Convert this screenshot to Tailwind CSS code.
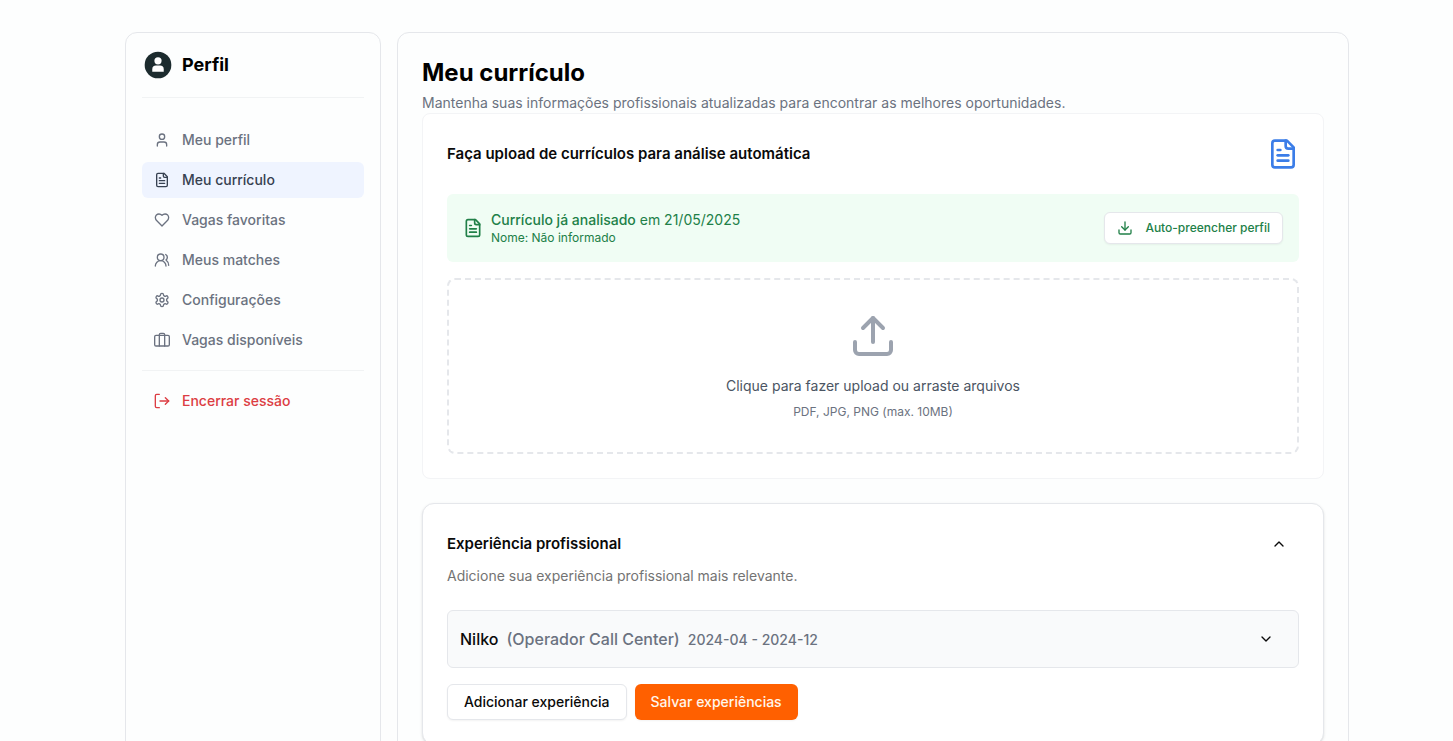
<!DOCTYPE html>
<html lang="pt-BR">
<head>
  <meta charset="UTF-8" />
  <meta name="viewport" content="width=device-width, initial-scale=1.0" />
  <title>Meu currículo</title>
  <script src="https://cdn.jsdelivr.net/npm/@tailwindcss/browser@4"></script>
</head>
<body class="bg-[#fdfefe] text-[#0a0a0a] font-['Inter',sans-serif] antialiased">
  <!-- Icons -->
  <svg class="hidden" xmlns="http://www.w3.org/2000/svg">
    <symbol id="file-text" viewBox="0 0 24 24">
      <path d="M15 2H6a2 2 0 0 0-2 2v16a2 2 0 0 0 2 2h12a2 2 0 0 0 2-2V7Z" />
      <path d="M14 2v4a2 2 0 0 0 2 2h4" />
      <path d="M10 9H8" />
      <path d="M16 13H8" />
      <path d="M16 17H8" />
    </symbol>
  </svg>

  <div class="flex min-h-screen gap-4 pt-8 pl-[125px] pr-[104px]">
    <aside class="w-64 shrink-0 rounded-xl border border-[#e5e7eb] p-4">
      <div class="flex items-center gap-2 border-b border-[#f1f3f4] pb-4">
        <svg class="size-8" viewBox="0 0 24 24">
          <circle cx="12" cy="12" r="10" fill="#1c2b2e" />
          <circle cx="12" cy="8.9" r="2.7" fill="#fff" />
          <path d="M7.7 17v-1.8a2.8 2.8 0 0 1 2.8-2.8h3a2.8 2.8 0 0 1 2.8 2.8V17Z" fill="#fff" />
        </svg>
        <h2 class="text-lg font-bold text-black">Perfil</h2>
      </div>

      <nav class="mt-6 flex flex-col gap-1 text-sm font-medium text-[#6b7280]">
        <a href="#" class="flex h-9 items-center gap-3 rounded-md px-3">
          <svg class="size-4" viewBox="0 0 24 24" fill="none" stroke="currentColor" stroke-width="2" stroke-linecap="round" stroke-linejoin="round">
            <path d="M19 21v-2a4 4 0 0 0-4-4H9a4 4 0 0 0-4 4v2" />
            <circle cx="12" cy="7" r="4" />
          </svg>
          Meu perfil
        </a>
        <a href="#" class="flex h-9 items-center gap-3 rounded-md bg-[#eff4ff] px-3 text-[#374151]">
          <svg class="size-4" fill="none" stroke="currentColor" stroke-width="2" stroke-linecap="round" stroke-linejoin="round"><use href="#file-text" /></svg>
          Meu currículo
        </a>
        <a href="#" class="flex h-9 items-center gap-3 rounded-md px-3">
          <svg class="size-4" viewBox="0 0 24 24" fill="none" stroke="currentColor" stroke-width="2" stroke-linecap="round" stroke-linejoin="round">
            <path d="M19 14c1.49-1.46 3-3.21 3-5.5A5.5 5.5 0 0 0 16.5 3c-1.76 0-3 .5-4.5 2-1.5-1.5-2.74-2-4.5-2A5.5 5.5 0 0 0 2 8.5c0 2.3 1.5 4.05 3 5.5l7 7Z" />
          </svg>
          Vagas favoritas
        </a>
        <a href="#" class="flex h-9 items-center gap-3 rounded-md px-3">
          <svg class="size-4" viewBox="0 0 24 24" fill="none" stroke="currentColor" stroke-width="2" stroke-linecap="round" stroke-linejoin="round">
            <path d="M18 21a8 8 0 0 0-16 0" />
            <circle cx="10" cy="8" r="5" />
            <path d="M22 20c0-3.37-2-6.5-4-8a5 5 0 0 0-.45-8.3" />
          </svg>
          Meus matches
        </a>
        <a href="#" class="flex h-9 items-center gap-3 rounded-md px-3">
          <svg class="size-4" viewBox="0 0 24 24" fill="none" stroke="currentColor" stroke-width="2" stroke-linecap="round" stroke-linejoin="round">
            <path d="M12.22 2h-.44a2 2 0 0 0-2 2v.18a2 2 0 0 1-1 1.73l-.43.25a2 2 0 0 1-2 0l-.15-.08a2 2 0 0 0-2.73.73l-.22.38a2 2 0 0 0 .73 2.73l.15.1a2 2 0 0 1 1 1.72v.51a2 2 0 0 1-1 1.74l-.15.09a2 2 0 0 0-.73 2.73l.22.38a2 2 0 0 0 2.73.73l.15-.08a2 2 0 0 1 2 0l.43.25a2 2 0 0 1 1 1.73V20a2 2 0 0 0 2 2h.44a2 2 0 0 0 2-2v-.18a2 2 0 0 1 1-1.73l.43-.25a2 2 0 0 1 2 0l.15.08a2 2 0 0 0 2.73-.73l.22-.39a2 2 0 0 0-.73-2.73l-.15-.08a2 2 0 0 1-1-1.74v-.5a2 2 0 0 1 1-1.74l.15-.09a2 2 0 0 0 .73-2.73l-.22-.38a2 2 0 0 0-2.73-.73l-.15.08a2 2 0 0 1-2 0l-.43-.25a2 2 0 0 1-1-1.73V4a2 2 0 0 0-2-2z" />
            <circle cx="12" cy="12" r="3" />
          </svg>
          Configurações
        </a>
        <a href="#" class="flex h-9 items-center gap-3 rounded-md px-3">
          <svg class="size-4" viewBox="0 0 24 24" fill="none" stroke="currentColor" stroke-width="2" stroke-linecap="round" stroke-linejoin="round">
            <rect x="1" y="5" width="22" height="16" rx="2" />
            <path d="M16 21V4a2 2 0 0 0-2-2h-4a2 2 0 0 0-2 2v17" />
          </svg>
          Vagas disponíveis
        </a>
      </nav>

      <div class="mt-3 border-t border-[#f1f3f4] pt-3">
        <button type="button" class="flex h-9 w-full items-center gap-3 rounded-md px-3 text-sm font-medium text-[#dc3d43]">
          <svg class="size-4" viewBox="0 0 24 24" fill="none" stroke="currentColor" stroke-width="2" stroke-linecap="round" stroke-linejoin="round">
            <path d="M8 22H4a2 2 0 0 1-2-2V4a2 2 0 0 1 2-2h4" />
            <path d="m17 17 5-5-5-5" />
            <path d="M22 12H9" />
          </svg>
          Encerrar sessão
        </button>
      </div>
    </aside>

    <main class="min-w-0 flex-1 rounded-xl border border-[#e5e7eb] p-6">
      <h1 class="text-2xl font-bold text-black">Meu currículo</h1>
      <p class="mt-1 text-sm text-[#6b7280]">Mantenha suas informações profissionais atualizadas para encontrar as melhores oportunidades.</p>

      <section class="rounded-lg border border-gray-100 bg-white p-6">
        <div class="flex items-center justify-between">
          <h2 class="text-[15px] font-semibold">Faça upload de currículos para análise automática</h2>
          <svg class="size-8 text-[#3b7de8]" fill="none" stroke="currentColor" stroke-width="2" stroke-linecap="round" stroke-linejoin="round"><use href="#file-text" /></svg>
        </div>

        <div class="mt-6 flex items-center justify-between rounded-md bg-[#f0fdf4] p-4 text-[#218048]">
          <div class="flex items-center gap-2">
            <svg class="size-5" fill="none" stroke="currentColor" stroke-width="2" stroke-linecap="round" stroke-linejoin="round"><use href="#file-text" /></svg>
            <div>
              <p class="text-sm"><span class="font-medium">Currículo já analisado</span> em 21/05/2025</p>
              <p class="text-xs">Nome: Não informado</p>
            </div>
          </div>
          <button type="button" class="flex h-8 items-center gap-3 rounded-md border border-gray-200 bg-white px-3 text-xs font-medium shadow-xs">
            <svg class="size-4" viewBox="0 0 24 24" fill="none" stroke="currentColor" stroke-width="2" stroke-linecap="round" stroke-linejoin="round">
              <path d="M21 15v4a2 2 0 0 1-2 2H5a2 2 0 0 1-2-2v-4" />
              <path d="m7 10 5 5 5-5" />
              <path d="M12 15V3" />
            </svg>
            Auto-preencher perfil
          </button>
        </div>

        <label for="curriculo" class="mt-4 flex cursor-pointer flex-col items-center rounded-lg border-2 border-dashed border-gray-200 p-8">
          <svg class="size-12 text-[#9ca3af]" viewBox="0 0 24 24" fill="none" stroke="currentColor" stroke-width="2" stroke-linecap="round" stroke-linejoin="round">
            <path d="M21 15v4a2 2 0 0 1-2 2H5a2 2 0 0 1-2-2v-4" />
            <path d="m17 8-5-5-5 5" />
            <path d="M12 3v12" />
          </svg>
          <span class="mt-4 text-sm text-[#4b5563]">Clique para fazer upload ou arraste arquivos</span>
          <span class="mt-2 text-xs text-[#6b7280]">PDF, JPG, PNG (max. 10MB)</span>
          <input id="curriculo" type="file" accept=".pdf,.jpg,.png" class="hidden" />
        </label>
      </section>

      <section class="mt-6 rounded-xl border border-gray-200 bg-white p-6 shadow-sm">
        <div class="flex items-center justify-between">
          <h2 class="text-[15px] font-semibold">Experiência profissional</h2>
          <button type="button" aria-label="Recolher" class="flex h-8 items-center px-3">
            <svg class="size-4" viewBox="0 0 24 24" fill="none" stroke="currentColor" stroke-width="2" stroke-linecap="round" stroke-linejoin="round"><path d="m18 15-6-6-6 6" /></svg>
          </button>
        </div>
        <p class="mt-1.5 text-sm text-neutral-500">Adicione sua experiência profissional mais relevante.</p>

        <div class="mt-6 flex items-center justify-between rounded-md border border-gray-200 bg-gray-50 p-3">
          <div class="flex items-baseline gap-2 font-medium">
            <span>Nilko</span>
            <span class="text-[#6b7280]">(Operador Call Center)</span>
            <span class="text-sm text-[#6b7280]">2024-04 - 2024-12</span>
          </div>
          <button type="button" aria-label="Expandir" class="flex h-8 items-center px-3">
            <svg class="size-4" viewBox="0 0 24 24" fill="none" stroke="currentColor" stroke-width="2" stroke-linecap="round" stroke-linejoin="round"><path d="m6 9 6 6 6-6" /></svg>
          </button>
        </div>

        <div class="mt-4 flex gap-2 text-sm font-medium">
          <button type="button" class="h-9 rounded-md border border-gray-200 bg-white px-4 shadow-xs">Adicionar experiência</button>
          <button type="button" class="h-9 rounded-md bg-[#ff6000] px-4 text-orange-50 shadow-xs">Salvar experiências</button>
        </div>
      </section>
    </main>
  </div>
</body>
</html>
